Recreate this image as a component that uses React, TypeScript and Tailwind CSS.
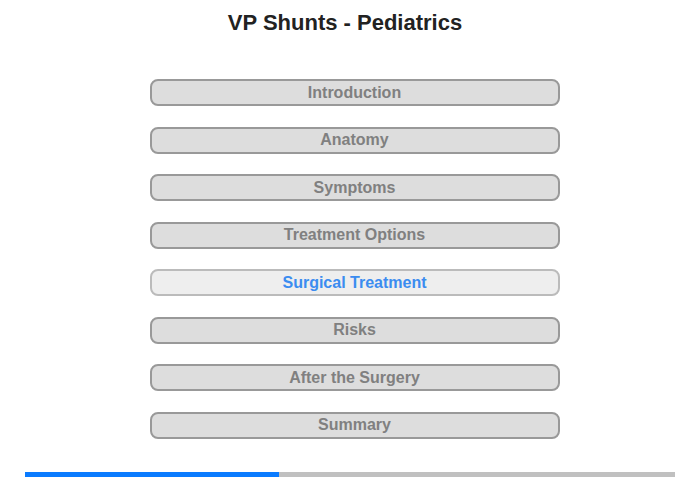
const sections = [
  "Introduction",
  "Anatomy",
  "Symptoms",
  "Treatment Options",
  "Surgical Treatment",
  "Risks",
  "After the Surgery",
  "Summary",
];

const active = "Surgical Treatment";

export default function App() {
  const progress = 39;

  return (
    <div
      className="flex h-[480px] w-[700px] flex-col bg-white"
      style={{ fontFamily: '"Liberation Sans", Arial, sans-serif' }}
    >
      {/* Title */}
      <h1 className="pt-[10px] pr-[10px] text-center text-[22px] font-bold leading-[26px] text-[#222]">
        VP Shunts - Pediatrics
      </h1>

      {/* Menu */}
      <div className="mt-[43px] flex flex-col items-center gap-[20.5px] pl-[9px]">
        {sections.map((s) => (
          <button
            key={s}
            className={`flex h-[27px] w-[410px] items-center justify-center rounded-[8px] border-2 text-[16px] font-bold ${
              s === active
                ? "border-[#bbb] bg-[#eee] text-[#3b8cf0]"
                : "border-[#999] bg-[#ddd] text-[#808080]"
            }`}
          >
            {s}
          </button>
        ))}
      </div>

      {/* Progress */}
      <div className="mt-auto mb-[3px] px-[25px]">
        <div className="h-[5px] w-full bg-[#c0c0c0]">
          <div className="h-full bg-[#0a7bff]" style={{ width: `${progress}%` }} />
        </div>
      </div>
    </div>
  );
}
